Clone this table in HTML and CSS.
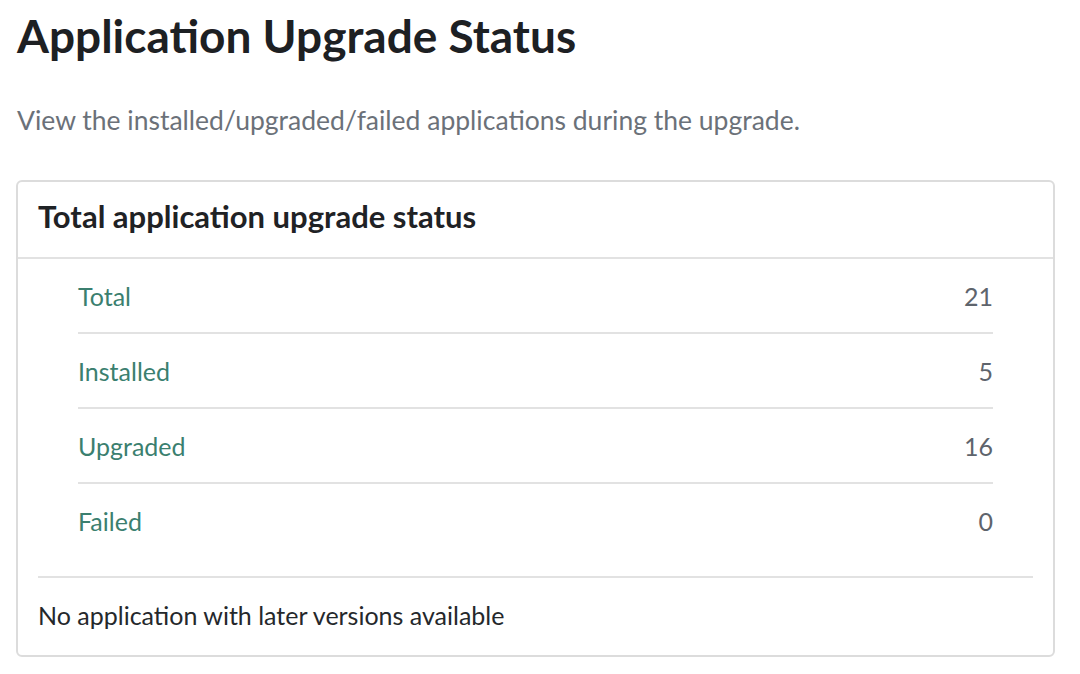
FILE: index.html
```html
<!DOCTYPE html>
<html lang="en">
<head>
<meta charset="utf-8">
<title>Application Upgrade Status</title>
<link rel="stylesheet" href="styles.css">
</head>
<body>
<main class="page">
  <h1 class="page-title">Application Upgrade Status</h1>
  <p class="page-subtitle">View the installed/upgraded/failed applications during the upgrade.</p>
  <section class="card">
    <header class="card-header">
      <h2 class="card-title">Total application upgrade status</h2>
    </header>
    <div class="card-body">
      <ul class="stats">
        <li class="stat"><span class="stat-label">Total</span><span class="stat-value">21</span></li>
        <li class="stat"><span class="stat-label">Installed</span><span class="stat-value">5</span></li>
        <li class="stat"><span class="stat-label">Upgraded</span><span class="stat-value">16</span></li>
        <li class="stat"><span class="stat-label">Failed</span><span class="stat-value">0</span></li>
      </ul>
      <p class="card-note">No application with later versions available</p>
    </div>
  </section>
</main>
</body>
</html>
```
FILE: styles.css
```css
* { box-sizing: border-box; }

html, body {
  margin: 0;
  background: #ffffff;
}

body {
  font-family: "Lato", "Open Sans", sans-serif;
  color: #222528;
}

.page {
  padding: 8px 0 0 16px;
  width: 1055px;
}

.page-title {
  margin: 0 0 0 1px;
  font-size: 46px;
  line-height: 55px;
  font-weight: 700;
  color: #1d2023;
}

.page-subtitle {
  margin: 41px 0 0 1px;
  font-size: 26.5px;
  line-height: 32px;
  font-weight: 400;
  color: #6b7179;
}

.card {
  margin-top: 44px;
  width: 1039px;
  border: 2px solid #dcdcdc;
  border-radius: 6px;
  background: #ffffff;
}

.card-header {
  padding: 15px 20px 22px;
  border-bottom: 2px solid #e2e2e2;
}

.card-title {
  margin: 0;
  font-size: 31px;
  line-height: 38px;
  font-weight: 700;
  color: #1f2225;
}

.card-body {
  padding: 0 20px;
}

.stats {
  list-style: none;
  margin: 0 40px;
  padding: 0 0 19px;
}

.stat {
  display: flex;
  align-items: center;
  justify-content: space-between;
  height: 75px;
  border-bottom: 2px solid #e2e2e2;
  font-size: 25px;
  line-height: 30px;
}

.stat:last-child {
  border-bottom: none;
  height: 73px;
}

.stat-label {
  color: #3b7f6f;
}

.stat-value {
  color: #5e646c;
}

.card-note {
  margin: 0;
  padding: 22px 0 25px;
  border-top: 2px solid #e2e2e2;
  font-size: 25px;
  line-height: 30px;
  color: #25282b;
}
```
